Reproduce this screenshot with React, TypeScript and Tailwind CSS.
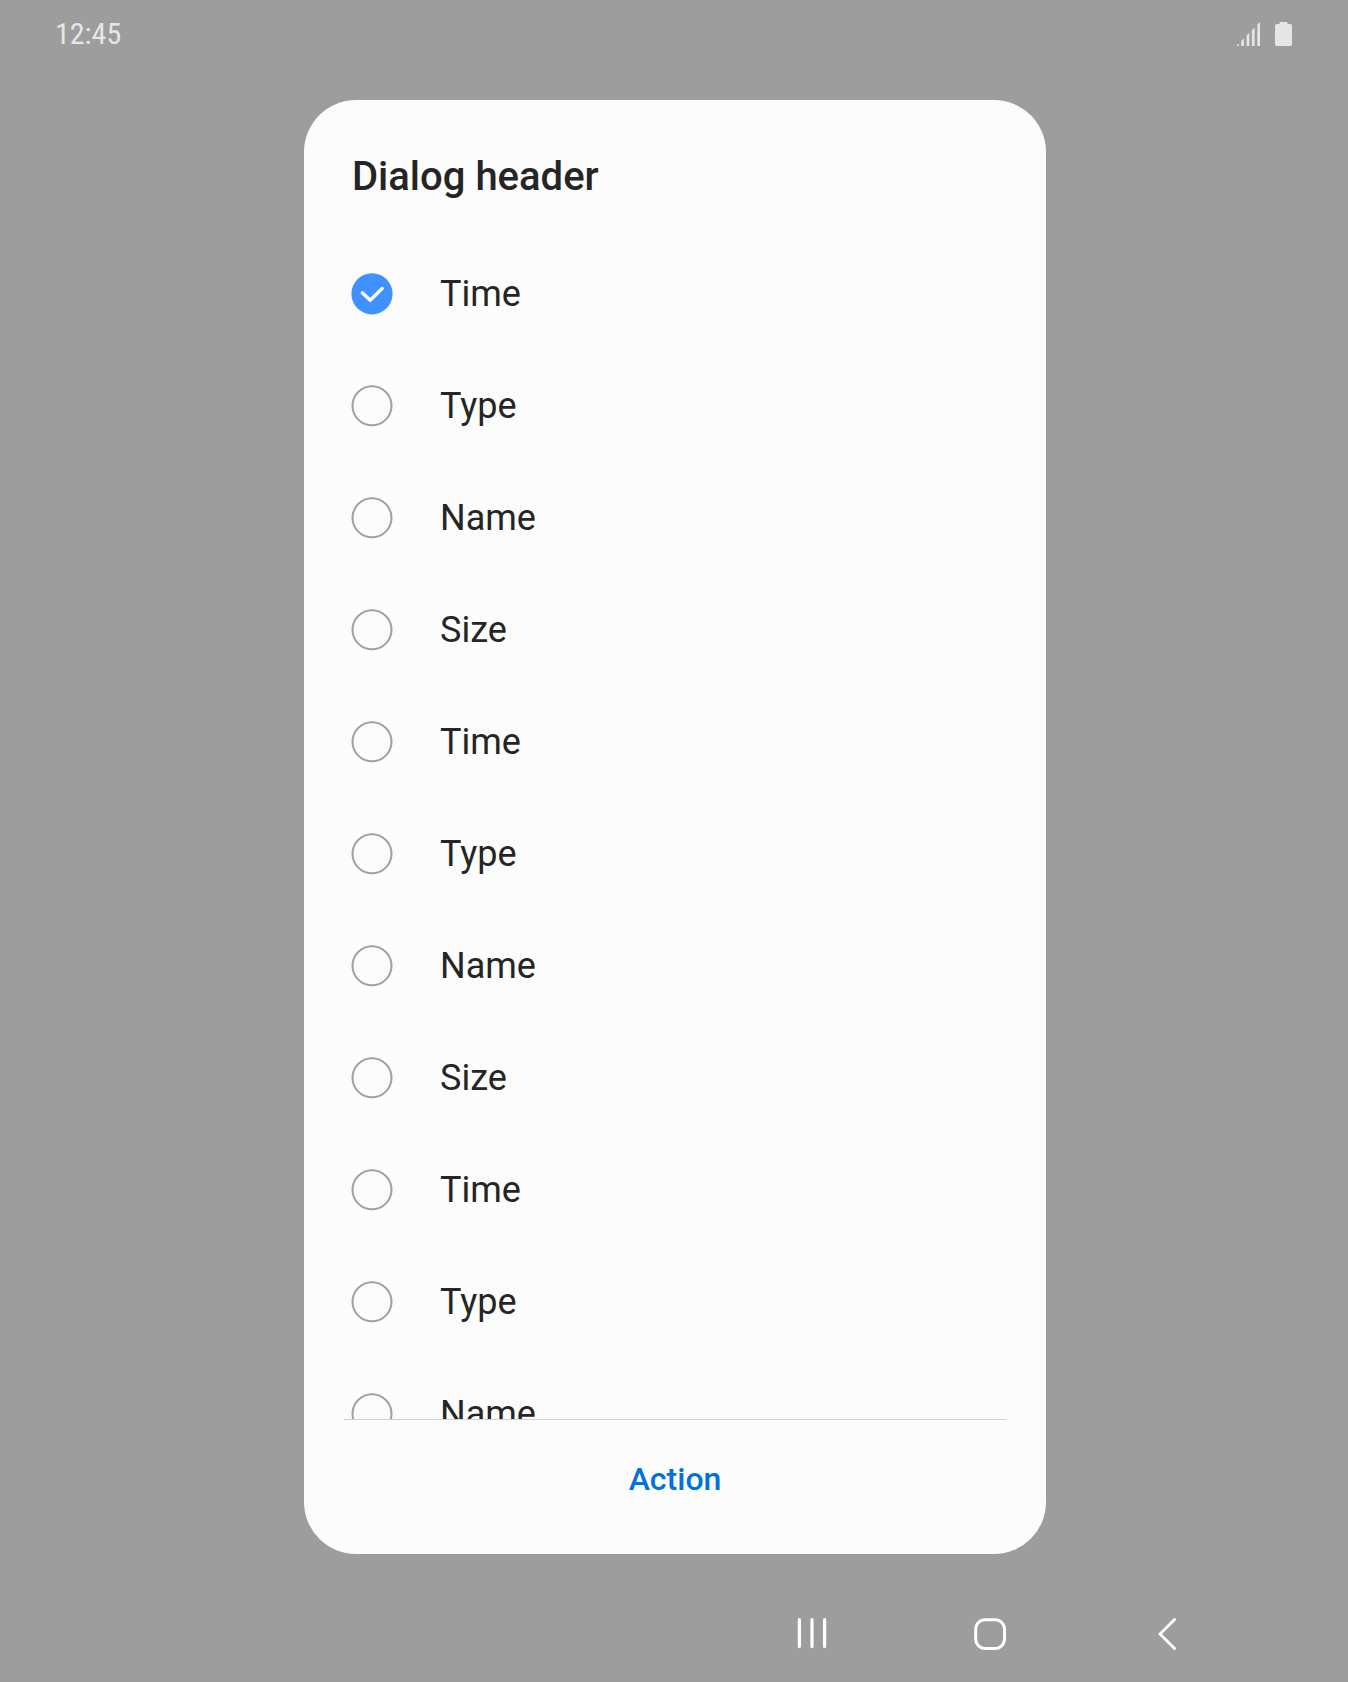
import React from "react";

const options = ["Time", "Type", "Name", "Size", "Time", "Type", "Name", "Size", "Time", "Type", "Name"];

function StatusBar() {
  return (
    <header className="flex h-[100px] items-start justify-between pl-[55px] pr-[56px] pt-[17px] text-[#e6e6e6]">
      <span className="text-[30px] leading-[34px] [font-stretch:75%]">12:45</span>
      <div className="flex items-start gap-[15px] pt-[5px]">
        <svg width="24" height="24" viewBox="0 0 24 24" fill="currentColor" aria-hidden="true">
          <path d="M0.3 24 L2.9 21.4 V24 Z M5.2 24 V19 L7.9 16.3 V24 Z M10.6 24 V13.4 L13.3 10.7 V24 Z M15.9 24 V8.2 L18.6 5.5 V24 Z M21.3 24 V2.8 L24 0 V24 Z" />
        </svg>
        <svg width="17" height="24" viewBox="0 0 17 24" fill="currentColor" aria-hidden="true">
          <path d="M5.5 0 H11.5 Q12.5 0 12.5 1 V2 H15 Q17 2 17 4 V22 Q17 24 15 24 H2 Q0 24 0 22 V4 Q0 2 2 2 H4.5 V1 Q4.5 0 5.5 0 Z" />
        </svg>
      </div>
    </header>
  );
}

function Radio({ checked }: { checked: boolean }) {
  return (
    <svg className="shrink-0" width="42" height="42" viewBox="0 0 42 42" fill="none" aria-hidden="true">
      {checked ? (
        <>
          <circle cx="21" cy="20.8" r="20.6" fill="#3e91ff" />
          <path d="M11.3 19.8 L19.2 27.2 L31.2 15.5" stroke="#fcfcfc" strokeWidth="3.4" strokeLinecap="round" strokeLinejoin="round" />
        </>
      ) : (
        <circle cx="21" cy="20.8" r="19.5" stroke="#a0a0a0" strokeWidth="2" />
      )}
    </svg>
  );
}

function NavBar() {
  return (
    <nav className="flex grow items-start pl-[796px] pt-[62px]">
      <svg width="32" height="36" viewBox="0 0 32 36" stroke="#fff" strokeWidth="3.2" strokeLinecap="round" aria-hidden="true">
        <path d="M3.4 3.6 V30.6 M16 3.6 V30.6 M28.6 3.6 V30.6" />
      </svg>
      <svg className="ml-[144px]" width="36" height="36" viewBox="0 0 36 36" fill="none" stroke="#fff" strokeWidth="3" aria-hidden="true">
        <rect x="3.7" y="3.7" width="28.8" height="28.8" rx="9.5" />
      </svg>
      <svg className="ml-[148px]" width="24" height="36" viewBox="0 0 24 36" fill="none" stroke="#fff" strokeWidth="2.8" strokeLinecap="round" aria-hidden="true">
        <path d="M18.6 3.5 L4 18 L18.6 32.4" />
      </svg>
    </nav>
  );
}

export default function App() {
  return (
    <div className="flex h-[1682px] w-[1348px] flex-col overflow-hidden bg-[#9d9d9d] font-['Roboto',sans-serif]">
      <StatusBar />
      <main className="ml-[304px] flex h-[1454px] w-[742px] shrink-0 flex-col rounded-[52px] bg-[#fcfcfc] pt-[53px] text-[#252525]">
        <h1 className="mb-[37px] h-12 pl-12 text-[40px] font-medium leading-[48px]">Dialog header</h1>
        <ul className="mx-10 h-[1182px] overflow-hidden border-b border-[#d2d2d2] pl-[7px]">
          {options.map((label, index) => (
            <li key={index} className="flex h-28 items-center gap-[47px] text-[36px] leading-[42px]">
              <Radio checked={index === 0} />
              <span>{label}</span>
            </li>
          ))}
        </ul>
        <button className="h-[118px] text-[32px] font-medium text-[#0072de]">Action</button>
      </main>
      <NavBar />
    </div>
  );
}
